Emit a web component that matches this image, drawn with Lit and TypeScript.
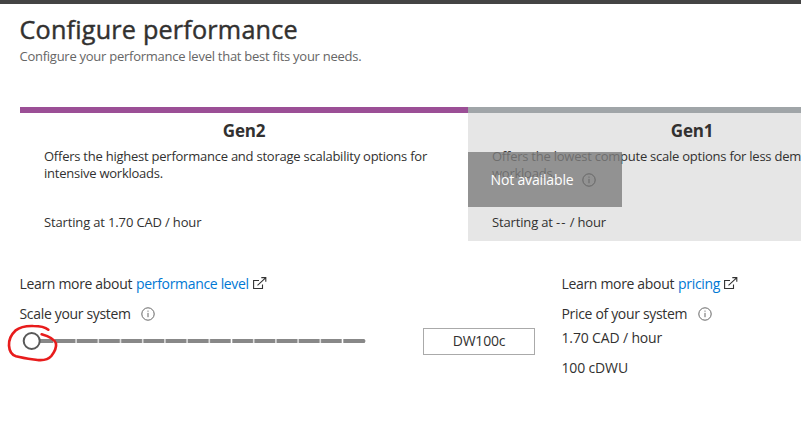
import { LitElement, html, css, svg } from "lit";
import { customElement, property } from "lit/decorators.js";

@customElement("info-icon")
class InfoIcon extends LitElement {
  static styles = css`
    :host { display: block; width: 14px; height: 14px; color: #666; }
    svg { display: block; }
  `;
  render() {
    return html`<svg width="14" height="14" viewBox="0 0 14 14" fill="none" stroke="currentColor">
      <circle cx="7" cy="7" r="6.2" stroke-width="1"></circle>
      <path d="M7 5.9V10.2M7 3.6V4.7" stroke-width="1"></path>
    </svg>`;
  }
}

@customElement("external-icon")
class ExternalIcon extends LitElement {
  static styles = css`
    :host { display: block; width: 14px; height: 14px; color: #333; }
    svg { display: block; }
  `;
  render() {
    return html`<svg width="14" height="14" viewBox="0 0 14 14" fill="none" stroke="currentColor" stroke-width="1.1">
      <path d="M6 3.5H0.6V11.5H9.5V7.5"></path>
      <path d="M4.5 8.3L12.6 0.8M8.3 0.6H12.8V4.8"></path>
    </svg>`;
  }
}

@customElement("scale-slider")
class ScaleSlider extends LitElement {
  @property({ type: Number }) steps = 15;
  static styles = css`
    :host { display: block; position: relative; width: 346px; height: 22px; }
    svg { display: block; overflow: visible; }
    .mark { position: absolute; left: -20px; top: -65px; pointer-events: none; }
  `;
  render() {
    const ticks = Array.from({ length: this.steps - 1 }, (_, i) => i + 1);
    return html`
      <svg width="346" height="22" viewBox="0 0 346 22">
        <rect x="12" y="9" width="333.3" height="4" rx="1.5" fill="#888"></rect>
        ${ticks.map((t) => svg`<rect x=${10.9 + t * 22.2} y="9" width="1.6" height="4" fill=${t === 9 || t === 14 ? "#fff" : "#ddd"}></rect>`)}
        <circle cx="11.7" cy="11" r="8" fill="#fff" stroke="#595959" stroke-width="2"></circle>
      </svg>
      <svg class="mark" width="80" height="110" viewBox="0 0 240 330" fill="none">
        <path d="M145 194C135 186 122 183 100 183C75 182 60 186 46 197C32 210 26 226 27 242C28 258 36 270 48 274C70 280 90 282 112 285C132 287 144 285 154 273C163 261 170 247 168 236C165 225 146 214 125 208" stroke="#e81c1c" stroke-width="8" stroke-linecap="round" stroke-linejoin="round"></path>
      </svg>
    `;
  }
}

@customElement("app-root")
class AppRoot extends LitElement {
  static styles = css`
    :host {
      display: block; box-sizing: border-box; height: 430px; overflow: hidden;
      border-top: 4px solid #444; background: #fff; color: #323130;
      font: 13px/17px "Open Sans", "Noto Sans", sans-serif; white-space: nowrap;
    }
    header { padding: 8px 20px 0 19.5px; height: 95px; }
    h1 {
      margin: 0; font-size: 25.2px; line-height: 34px; font-weight: 500;
      letter-spacing: 0.2px; -webkit-text-stroke: 0.45px currentColor;
    }
    .sub { color: #666; line-height: 20px; letter-spacing: -0.26px; }
    .cards { display: flex; padding-left: 20px; }
    .card { box-sizing: border-box; flex: none; width: 448px; height: 134px; border-top: 6px solid #9b4f96; padding: 7px 24px 0; }
    .old { position: relative; background: #e6e6e6; border-color: #a0a5a8; }
    h2 { margin: 0; font-size: 17px; line-height: 20px; font-weight: 700; text-align: center; padding-top: 1px; letter-spacing: -0.2px; }
    .desc { height: 73px; padding-top: 7px; white-space: pre; box-sizing: border-box; letter-spacing: -0.24px; }
    .start { letter-spacing: -0.15px; }
    .dashes { letter-spacing: 1px; }
    .veil {
      position: absolute; left: 0; top: 39px; width: 154px; height: 55px; box-sizing: border-box;
      display: flex; align-items: center; gap: 8.5px; padding-left: 22.5px;
      background: rgba(125, 125, 125, 0.8); color: #fff; font-size: 14px; letter-spacing: -0.15px;
    }
    .veil info-icon { color: #666; }
    .bottom { display: grid; grid-template-columns: 403px 139px 1fr; padding: 33px 0 0 20px; font-size: 14px; line-height: 20px; }
    .line { display: flex; align-items: center; height: 20px; letter-spacing: -0.33px; }
    .line > span:first-child { margin-left: -0.5px; }
    .line + .line { margin-top: 10px; }
    .link { color: #0078d4; margin-left: 4px; }
    .line external-icon { margin-left: 4px; }
    .line info-icon { margin-left: 10.5px; }
    scale-slider { margin-top: 6px; }
    .value {
      box-sizing: border-box; width: 112px; height: 27px; margin-top: 54px; border: 1px solid #aaa; padding-bottom: 2px;
      display: flex; align-items: center; justify-content: center; letter-spacing: -0.2px;
    }
    .price .line:nth-child(3) { margin-top: 4px; }
    .price .line:nth-child(n + 3) { letter-spacing: -0.15px; }
  `;
  render() {
    return html`
      <header>
        <h1><span>Configure performance</span></h1>
        <div class="sub"><span>Configure your performance level that best fits your needs.</span></div>
      </header>
      <section class="cards">
        <div class="card">
          <h2>Gen2</h2>
          <div class="desc">Offers the highest performance and storage scalability options for<br />intensive workloads.</div>
          <div class="start">Starting at 1.70 CAD / hour</div>
        </div>
        <div class="card old">
          <h2>Gen1</h2>
          <div class="desc">Offers the lowest compute scale options for less demanding<br />workloads.</div>
          <div class="start">Starting at <span class="dashes">--</span> / hour</div>
          <div class="veil"><span>Not available</span><info-icon></info-icon></div>
        </div>
      </section>
      <section class="bottom">
        <div class="scale">
          <div class="line"><span>Learn more about</span><span class="link">performance level</span><external-icon></external-icon></div>
          <div class="line"><span>Scale your system</span><info-icon></info-icon></div>
          <scale-slider></scale-slider>
        </div>
        <div class="value">DW100c</div>
        <div class="price">
          <div class="line"><span>Learn more about</span><span class="link">pricing</span><external-icon></external-icon></div>
          <div class="line"><span>Price of your system</span><info-icon></info-icon></div>
          <div class="line"><span>1.70 CAD / hour</span></div>
          <div class="line"><span>100 cDWU</span></div>
        </div>
      </section>
    `;
  }
}
